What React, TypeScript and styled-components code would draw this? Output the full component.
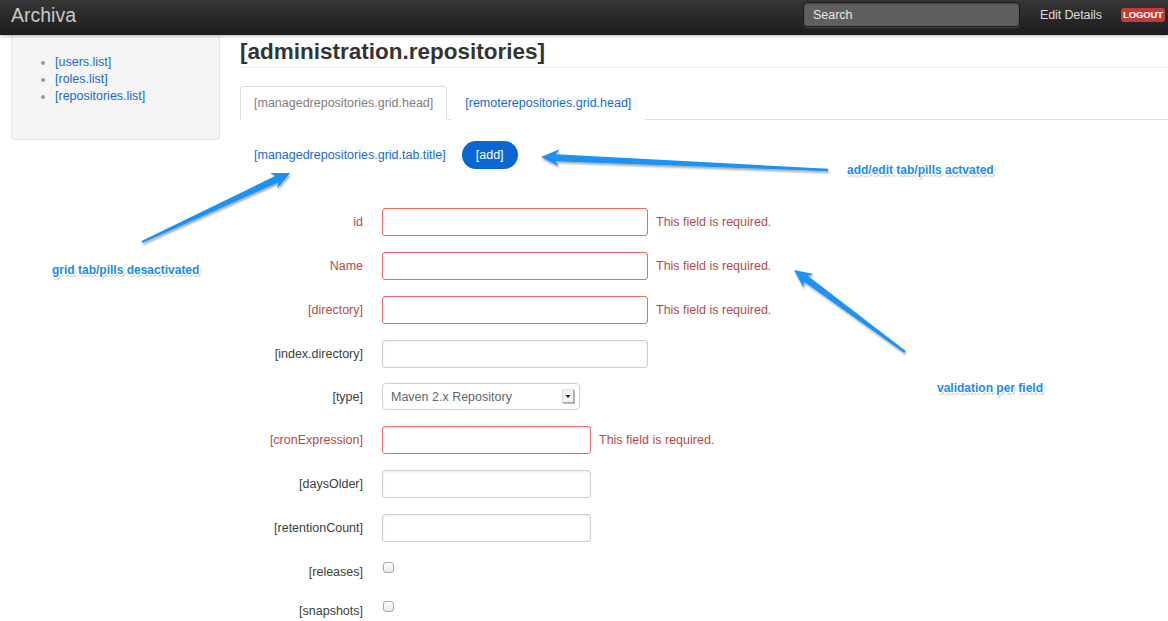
import styled, { createGlobalStyle } from "styled-components";

const GlobalStyle = createGlobalStyle`
  html, body {
    margin: 0;
    padding: 0;
    background: #fff;
  }
  body {
    font-family: "Liberation Sans", Arial, sans-serif;
    font-size: 12.5px;
    line-height: 18px;
    color: #404040;
  }
  * {
    box-sizing: border-box;
  }
`;

const Page = styled.div`
  position: relative;
  width: 1168px;
  height: 621px;
  overflow: hidden;
`;

const Topbar = styled.div`
  height: 35px;
  display: flex;
  align-items: center;
  padding: 0 3px 0 11px;
  background: linear-gradient(to bottom, #363636, #1c1c1c);
  box-shadow: 0 1px 3px rgba(0, 0, 0, 0.3);
  position: relative;
  z-index: 2;
`;

const Brand = styled.a`
  font-size: 19.5px;
  color: #c8c8c8;
  text-decoration: none;
  flex: 1;
  line-height: 26px;
  margin-top: -6px;
`;

const SearchBox = styled.div`
  width: 217px;
  height: 25px;
  margin-top: -6px;
  border: 1px solid #1a1a1a;
  border-radius: 4px;
  background: #5f5f5f;
  box-shadow: inset 0 1px 2px rgba(0, 0, 0, 0.3), 0 1px 0 rgba(255, 255, 255, 0.15);
  color: #e6e6e6;
  padding: 0 9px;
  display: flex;
  align-items: center;
`;

const TopLink = styled.a`
  color: #dcdcdc;
  margin-left: 20px;
  margin-top: -6px;
  text-decoration: none;
  letter-spacing: -0.1px;
`;

const LogoutBadge = styled.span`
  margin-left: 19px;
  margin-top: -5px;
  background: #c43c35;
  color: #fff;
  font-size: 9.5px;
  font-weight: bold;
  line-height: 14px;
  padding: 0 2px;
  border-radius: 3px;
  letter-spacing: -0.1px;
`;

const Layout = styled.div`
  display: flex;
  padding-left: 11px;
  gap: 20px;
`;

const Sidebar = styled.div`
  width: 209px;
  flex: none;
`;

const Well = styled.div`
  height: 105px;
  background: #f5f5f5;
  border: 1px solid #e6e6e6;
  border-top: none;
  border-radius: 0 0 4px 4px;
  padding: 19px 0 0 19px;
`;

const NavList = styled.ul`
  margin: 0;
  padding-left: 24px;
  line-height: 17px;
`;

const NavItem = styled.li`
  color: #999;
`;

const Link = styled.a`
  color: #1769d8;
  text-decoration: none;
`;

const Content = styled.div`
  flex: 1;
`;

const PageHeader = styled.h1`
  margin: 3px 0 0;
  padding-bottom: 2px;
  font-size: 22.5px;
  line-height: 27px;
  font-weight: bold;
  color: #333;
  border-bottom: 1px solid #eee;
`;

const Tabs = styled.ul`
  list-style: none;
  margin: 18px 0 0;
  padding: 0;
  display: flex;
  border-bottom: 1px solid #ddd;
`;

const Tab = styled.li<{ $active?: boolean }>`
  margin-right: 4px;
  margin-bottom: -1px;
  padding: 7px 13px;
  border: 1px solid ${(p) => (p.$active ? "#ddd" : "transparent")};
  border-bottom-color: ${(p) => (p.$active ? "#fff" : "transparent")};
  border-radius: 4px 4px 0 0;
  background: #fff;
  color: ${(p) => (p.$active ? "#808080" : "#1769d8")};
`;

const Pills = styled.ul`
  list-style: none;
  margin: 21px 0 0;
  padding: 0;
  display: flex;
  gap: 2px;
`;

const Pill = styled.li<{ $active?: boolean }>`
  height: 28px;
  line-height: 28px;
  padding: 0 14px;
  border-radius: 15px;
  background: ${(p) => (p.$active ? "#0a67d2" : "transparent")};
  color: ${(p) => (p.$active ? "#fff" : "#1769d8")};
`;

const Form = styled.form`
  margin-top: 39px;
  display: flex;
  flex-direction: column;
`;

const Row = styled.div<{ $h: number; $gap: number }>`
  display: flex;
  align-items: flex-start;
  height: ${(p) => p.$h}px;
  margin-bottom: ${(p) => p.$gap}px;
`;

const Label = styled.label<{ $error?: boolean }>`
  width: 123px;
  flex: none;
  text-align: right;
  padding-top: 5px;
  margin-right: 19px;
  color: ${(p) => (p.$error ? "#b94a48" : "#404040")};
`;

const TextInput = styled.input<{ $error?: boolean; $w: number }>`
  width: ${(p) => p.$w}px;
  height: 28px;
  margin: 0;
  padding: 4px 6px;
  font: inherit;
  border: 1px solid ${(p) => (p.$error ? "#ee6b67" : "#cfcfcf")};
  border-radius: 3px;
  box-shadow: inset 0 1px 3px rgba(0, 0, 0, 0.08);
  outline: none;
`;

const ErrorText = styled.span`
  margin-left: 8px;
  padding-top: 5px;
  color: #b94a48;
`;

const SelectBox = styled.div`
  width: 198px;
  height: 27px;
  border: 1px solid #cfcfcf;
  border-radius: 4px;
  display: flex;
  align-items: center;
  justify-content: space-between;
  padding: 0 4px 0 8px;
  color: #666;
  background: #fff;
`;

const Checkbox = styled.input`
  appearance: none;
  width: 11px;
  height: 11px;
  margin: 4px 0 0 1px;
  border: 1px solid #a8a8a8;
  border-radius: 3px;
  background: linear-gradient(to bottom, #fff, #e8e8e8);
`;

const Overlay = styled.div`
  position: absolute;
  inset: 0;
  pointer-events: none;
  z-index: 3;
`;

const ArrowLayer = styled.svg`
  position: absolute;
  left: 0;
  top: 0;
`;

const Callout = styled.div<{ $x: number; $y: number }>`
  position: absolute;
  left: ${(p) => p.$x}px;
  top: ${(p) => p.$y}px;
  font-size: 12px;
  font-weight: bold;
  line-height: 14px;
  color: #1a8cf5;
  white-space: nowrap;
  text-shadow: -1px -1px 0 #fff, 1px -1px 0 #fff, -1px 1px 0 #fff, 1px 1px 0 #fff,
    0 -1.5px 0 #fff, 0 1.5px 0 #fff, -1.5px 0 0 #fff, 1.5px 0 0 #fff,
    1px 2px 2px rgba(0, 0, 0, 0.6);
`;

function arrowPoints(x1: number, y1: number, x2: number, y2: number) {
  const L = 18;
  const W = 8.5;
  const w1 = 7;
  const w0 = 2.5;
  const len = Math.hypot(x2 - x1, y2 - y1);
  const ux = (x2 - x1) / len;
  const uy = (y2 - y1) / len;
  const nx = -uy;
  const ny = ux;
  const jx = x2 - ux * L * 0.82;
  const jy = y2 - uy * L * 0.82;
  const bx = x2 - ux * L;
  const by = y2 - uy * L;
  const pts = [
    [x1 + (nx * w0) / 2, y1 + (ny * w0) / 2],
    [jx + (nx * w1) / 2, jy + (ny * w1) / 2],
    [bx + nx * W, by + ny * W],
    [x2, y2],
    [bx - nx * W, by - ny * W],
    [jx - (nx * w1) / 2, jy - (ny * w1) / 2],
    [x1 - (nx * w0) / 2, y1 - (ny * w0) / 2],
  ];
  return pts.map((p) => p.map((v) => v.toFixed(1)).join(",")).join(" ");
}

const arrows = [
  { from: [828, 170], to: [541, 157] },
  { from: [142, 242], to: [290, 173] },
  { from: [905, 352], to: [794, 270] },
];

function SelectArrow() {
  return (
    <svg width="13" height="15" viewBox="0 0 13 15">
      <rect x="0.5" y="0.5" width="11" height="13" fill="#f2f2f2" stroke="#e0e0e0" />
      <line x1="12" y1="1" x2="12" y2="14.5" stroke="#777" />
      <line x1="1" y1="14" x2="12.5" y2="14" stroke="#777" />
      <path d="M3.5 6 L8.5 6 L6 9 Z" fill="#111" />
    </svg>
  );
}

type Field = {
  label: string;
  error?: boolean;
  width?: number;
  kind?: "text" | "select" | "check";
  gap?: number;
};

const fields: Field[] = [
  { label: "id", error: true, width: 266 },
  { label: "Name", error: true, width: 266 },
  { label: "[directory]", error: true, width: 266 },
  { label: "[index.directory]", width: 266, gap: 15 },
  { label: "[type]", kind: "select" },
  { label: "[cronExpression]", error: true, width: 209 },
  { label: "[daysOlder]", width: 209 },
  { label: "[retentionCount]", width: 209 },
  { label: "[releases]", kind: "check" },
  { label: "[snapshots]", kind: "check" },
];

function rowHeight(f: Field) {
  if (f.kind === "check") return 23;
  if (f.kind === "select") return 27;
  return 28;
}

export default function App() {
  return (
    <Page>
      <GlobalStyle />
      <Topbar>
        <Brand>Archiva</Brand>
        <SearchBox>Search</SearchBox>
        <TopLink>Edit Details</TopLink>
        <LogoutBadge>LOGOUT</LogoutBadge>
      </Topbar>
      <Layout>
        <Sidebar>
          <Well>
            <NavList>
              <NavItem>
                <Link>[users.list]</Link>
              </NavItem>
              <NavItem>
                <Link>[roles.list]</Link>
              </NavItem>
              <NavItem>
                <Link>[repositories.list]</Link>
              </NavItem>
            </NavList>
          </Well>
        </Sidebar>
        <Content>
          <PageHeader>[administration.repositories]</PageHeader>
          <Tabs>
            <Tab $active>[managedrepositories.grid.head]</Tab>
            <Tab>[remoterepositories.grid.head]</Tab>
          </Tabs>
          <Pills>
            <Pill>[managedrepositories.grid.tab.title]</Pill>
            <Pill $active>[add]</Pill>
          </Pills>
          <Form>
            {fields.map((f) => (
              <Row key={f.label} $h={rowHeight(f)} $gap={f.gap ?? 16}>
                <Label $error={f.error}>{f.label}</Label>
                {f.kind === "select" ? (
                  <SelectBox>
                    <span>Maven 2.x Repository</span>
                    <SelectArrow />
                  </SelectBox>
                ) : f.kind === "check" ? (
                  <Checkbox type="checkbox" />
                ) : (
                  <TextInput $w={f.width ?? 266} $error={f.error} />
                )}
                {f.error && <ErrorText>This field is required.</ErrorText>}
              </Row>
            ))}
          </Form>
        </Content>
      </Layout>
      <Overlay>
        <ArrowLayer width="1168" height="621">
          <defs>
            <filter id="arrowShadow" x="-10%" y="-10%" width="120%" height="130%">
              <feDropShadow dx="1" dy="2" stdDeviation="1.3" floodColor="#000" floodOpacity="0.35" />
            </filter>
          </defs>
          {arrows.map((a, i) => (
            <polygon
              key={i}
              points={arrowPoints(a.from[0], a.from[1], a.to[0], a.to[1])}
              fill="#1a92f4"
              filter="url(#arrowShadow)"
            />
          ))}
        </ArrowLayer>
        <Callout $x={847} $y={163}>add/edit tab/pills actvated</Callout>
        <Callout $x={52} $y={263}>grid tab/pills desactivated</Callout>
        <Callout $x={937} $y={381}>validation per field</Callout>
      </Overlay>
    </Page>
  );
}
